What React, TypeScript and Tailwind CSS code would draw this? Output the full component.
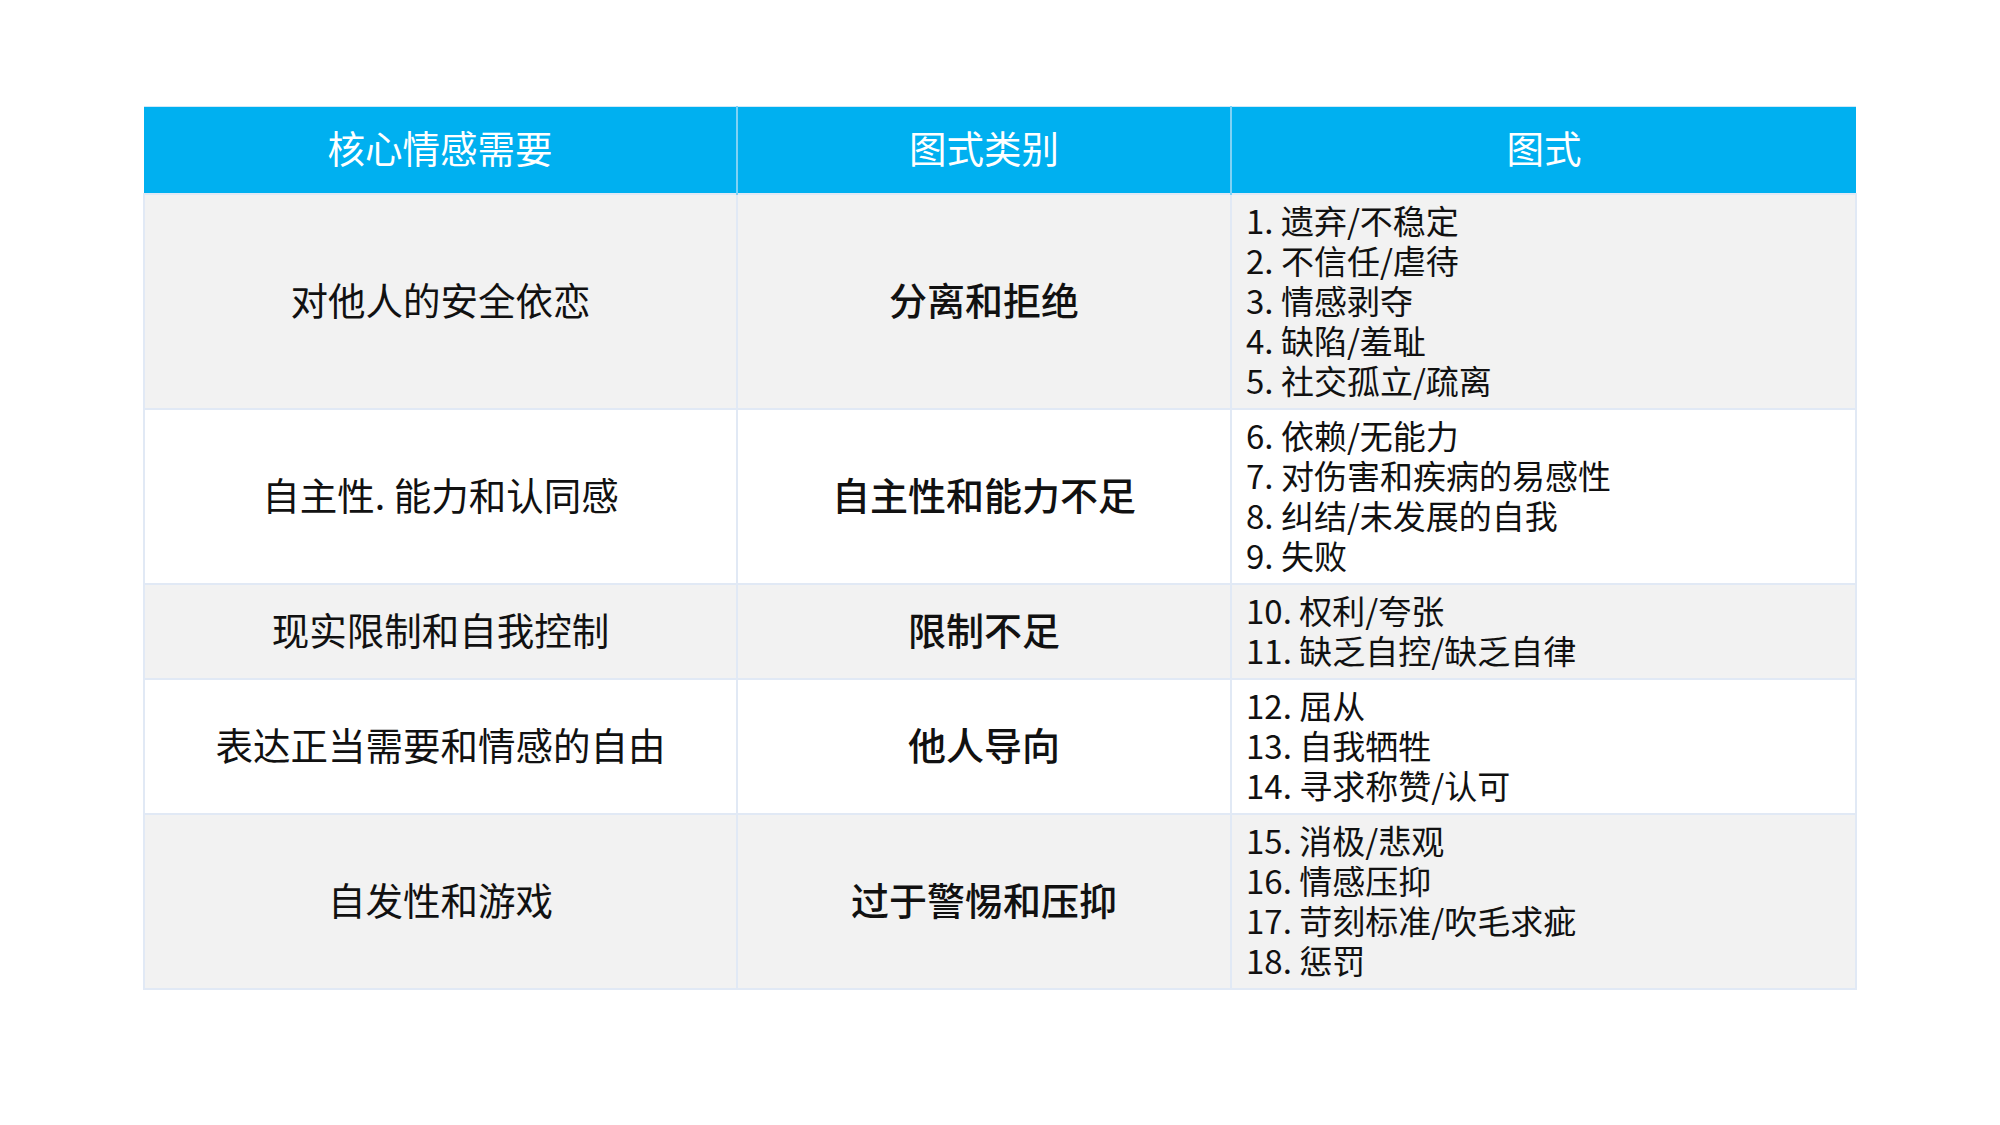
import React from "react";

type Row = { need: string; cat: string; items: string[]; bg: string };

const rows: Row[] = [
  {
    need: "对他人的安全依恋",
    cat: "分离和拒绝",
    items: ["1. 遗弃/不稳定", "2. 不信任/虐待", "3. 情感剥夺", "4. 缺陷/羞耻", "5. 社交孤立/疏离"],
    bg: "bg-[#f2f2f2]",
  },
  {
    need: "自主性. 能力和认同感",
    cat: "自主性和能力不足",
    items: ["6. 依赖/无能力", "7. 对伤害和疾病的易感性", "8. 纠结/未发展的自我", "9. 失败"],
    bg: "bg-white",
  },
  {
    need: "现实限制和自我控制",
    cat: "限制不足",
    items: ["10. 权利/夸张", "11. 缺乏自控/缺乏自律"],
    bg: "bg-[#f2f2f2]",
  },
  {
    need: "表达正当需要和情感的自由",
    cat: "他人导向",
    items: ["12. 屈从", "13. 自我牺牲", "14. 寻求称赞/认可"],
    bg: "bg-white",
  },
  {
    need: "自发性和游戏",
    cat: "过于警惕和压抑",
    items: ["15. 消极/悲观", "16. 情感压抑", "17. 苛刻标准/吹毛求疵", "18. 惩罚"],
    bg: "bg-[#f2f2f2]",
  },
];

export default function App() {
  return (
    <div
      className="w-full min-h-screen bg-white pt-[106px]"
      style={{ fontFamily: '"Noto Sans CJK SC", "Noto Sans", sans-serif' }}
    >
      <table className="mx-auto w-[1712px] table-fixed border-collapse text-[#111]">
        <colgroup>
          <col className="w-[593px]" />
          <col className="w-[494px]" />
          <col className="w-[625px]" />
        </colgroup>
        <thead>
          <tr className="h-[87px] bg-[#00b0f0] text-white text-[37.5px] font-normal">
            <th className="border-t border-[#cfe8f8] border-r-2 border-r-[#7fd2f5] font-normal text-center align-middle pb-[5px]">
              核心情感需要
            </th>
            <th className="border-t border-[#cfe8f8] border-r-2 border-r-[#7fd2f5] font-normal text-center align-middle pb-[5px]">
              图式类别
            </th>
            <th className="border-t border-[#cfe8f8] font-normal text-center align-middle pb-[5px]">
              图式
            </th>
          </tr>
        </thead>
        <tbody>
          {rows.map((r, i) => (
            <tr key={i} className={r.bg}>
              <td className="border-2 border-[#e1e9f5] text-center align-middle pb-[5px] text-[37.5px] leading-[40px]">
                {r.need}
              </td>
              <td className="border-2 border-[#e1e9f5] text-center align-middle pb-[5px] text-[38px] leading-[40px] font-medium">
                {r.cat}
              </td>
              <td className="border-2 border-[#e1e9f5] align-middle pl-[14px] pt-[5px] pb-[8px] text-[33px] leading-[40px]">
                {r.items.map((t, j) => (
                  <div key={j}>{t}</div>
                ))}
              </td>
            </tr>
          ))}
        </tbody>
      </table>
    </div>
  );
}
